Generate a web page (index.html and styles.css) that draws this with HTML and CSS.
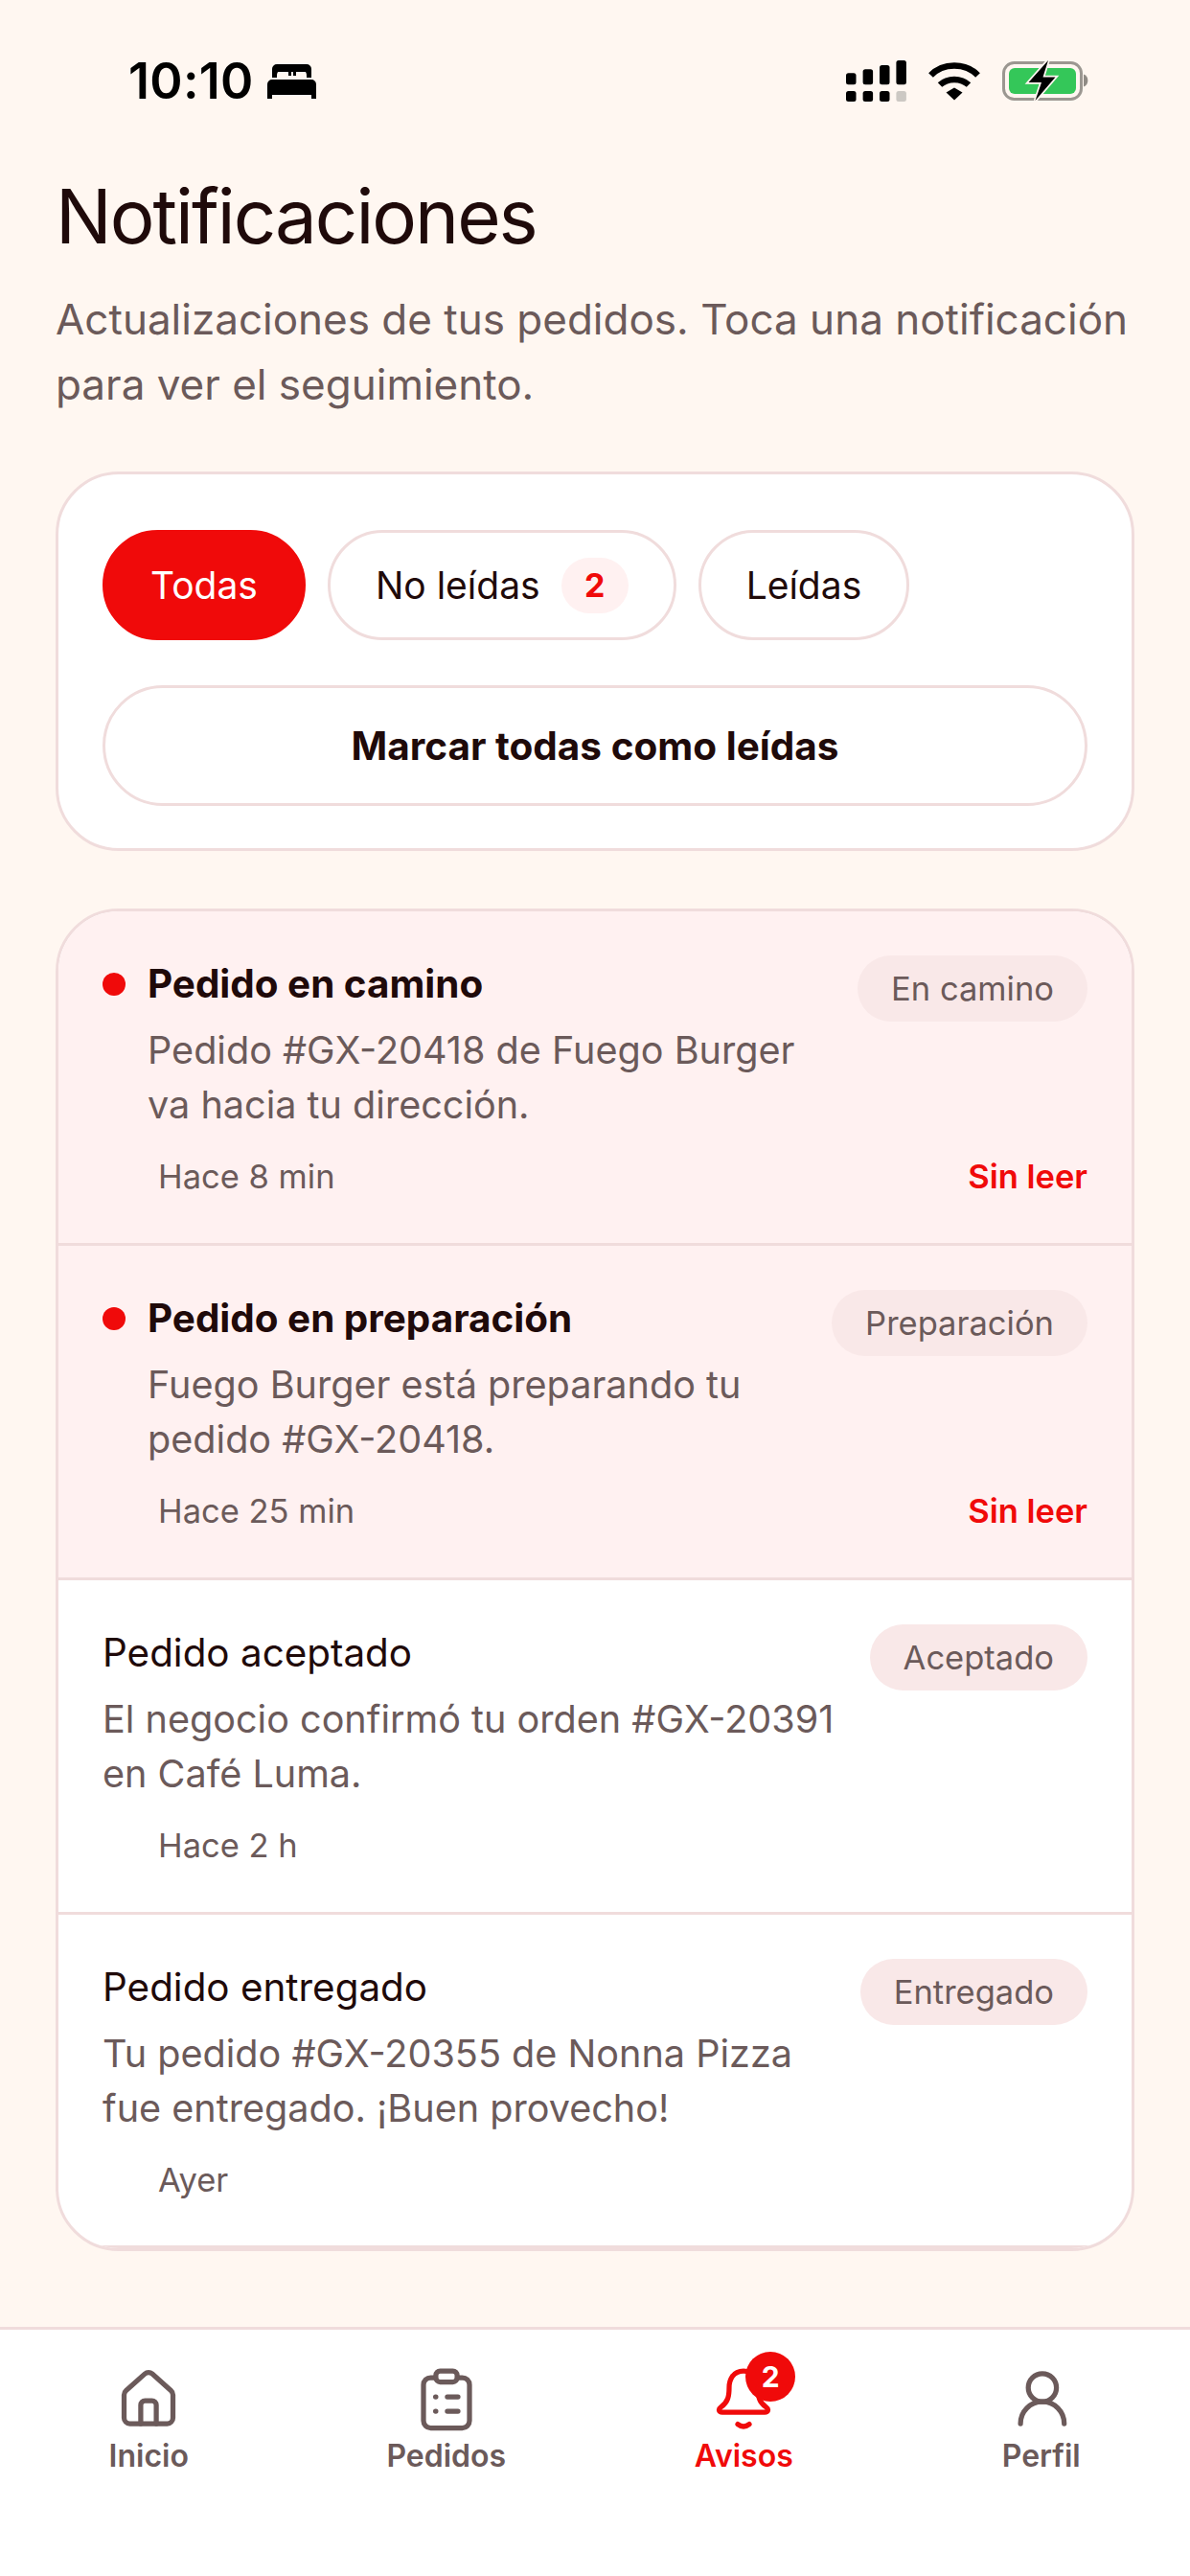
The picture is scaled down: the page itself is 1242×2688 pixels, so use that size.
FILE: index.html
```html
<!DOCTYPE html>
<html lang="es">
<head>
    <meta charset="UTF-8">
    <meta name="viewport" content="width=device-width, initial-scale=1.0">
    <title>Notificaciones</title>
    <link rel="stylesheet" href="styles.css">
</head>
<body>

<div class="page">
    <!-- Status bar -->
    <div class="status-bar">
        <div class="status-left">
            <span class="clock">10:10</span>
            <svg class="bed" width="52" height="36" viewBox="0 0 52 36">
                <path d="M5 14V5a5 5 0 0 1 5-5h31a5 5 0 0 1 5 5v9h-5v-2a6 6 0 0 0-1-4H30v4h-3V8h-2v4h-3V8H11a6 6 0 0 0-1 4v2z"/>
                <path d="M0 21a5 5 0 0 1 5-5h41a5 5 0 0 1 5 5v15h-5v-4H5v4H0z"/>
            </svg>
        </div>
        <div class="status-right">
            <svg width="63" height="43" viewBox="0 0 63 43">
                <rect x="0" y="13.3" width="10.5" height="12" rx="2.5"/>
                <rect x="17.6" y="9.3" width="10.5" height="16" rx="2.5"/>
                <rect x="35" y="5" width="10.5" height="20.300" rx="2.5"/>
                <rect x="52.400" y="0" width="10.5" height="25.300" rx="2.5"/>
                <rect x="0" y="32" width="10.5" height="11" rx="2.5"/>
                <rect x="17.6" y="32" width="10.5" height="11" rx="2.5"/>
                <rect x="35" y="32" width="10.5" height="11" rx="2.5"/>
                <rect x="52.400" y="32" width="10.5" height="11" rx="2.5" fill="#ccc8c3"/>
            </svg>
            <svg width="56" height="41" viewBox="0 0 56 41">
                <path d="M3.500 14.500C16 1 40 1 52.500 14.500" fill="none" stroke="#000" stroke-width="6.500"/>
                <path d="M13 24.500C21 17 35 17 43 24.500" fill="none" stroke="#000" stroke-width="6.500"/>
                <path d="M19.500 32.500L28 27.500L36.500 32.500L28 40.500Z"/>
            </svg>
            <svg width="90" height="44" viewBox="0 0 90 44">
                <rect x="1.500" y="3.500" width="81" height="38" rx="11" fill="none" stroke="#9b9791" stroke-width="3"/>
                <rect x="7" y="9" width="70" height="27" rx="6" fill="#34c759"/>
                <path d="M85 15.500a7 7 0 0 1 0 13z" fill="#8f8b85"/>
                <path d="M48 1L27.500 24H41L34.500 43L55.500 18.500H42.500Z" stroke="#fff7f1" stroke-width="3.500" paint-order="stroke"/>
            </svg>
        </div>
    </div>

    <main class="content">
        <h1 class="title">Notificaciones</h1>
        <p class="subtitle">Actualizaciones de tus pedidos. Toca una notificación para ver el seguimiento.</p>

        <!-- Filters -->
        <section class="card filters">
            <div class="chips">
                <span class="chip active">Todas</span>
                <span class="chip">No leídas <span class="chip-count">2</span></span>
                <span class="chip">Leídas</span>
            </div>
            <div class="mark-all">Marcar todas como leídas</div>
        </section>

        <!-- Notification list -->
        <section class="card list">
            <article class="item unread">
                <div class="item-top">
                    <div class="item-text">
                        <h2 class="item-title"><span class="dot"></span>Pedido en camino</h2>
                        <p class="item-desc">Pedido #GX-20418 de Fuego Burger va hacia tu dirección.</p>
                    </div>
                    <span class="tag">En camino</span>
                </div>
                <div class="item-meta">
                    <span class="time">Hace 8 min</span>
                    <span class="unread-label">Sin leer</span>
                </div>
            </article>
            <article class="item unread">
                <div class="item-top">
                    <div class="item-text">
                        <h2 class="item-title"><span class="dot"></span>Pedido en preparación</h2>
                        <p class="item-desc">Fuego Burger está preparando tu pedido #GX-20418.</p>
                    </div>
                    <span class="tag">Preparación</span>
                </div>
                <div class="item-meta">
                    <span class="time">Hace 25 min</span>
                    <span class="unread-label">Sin leer</span>
                </div>
            </article>
            <article class="item">
                <div class="item-top">
                    <div class="item-text">
                        <h2 class="item-title">Pedido aceptado</h2>
                        <p class="item-desc">El negocio confirmó tu orden #GX-20391 en Café Luma.</p>
                    </div>
                    <span class="tag">Aceptado</span>
                </div>
                <div class="item-meta">
                    <span class="time">Hace 2 h</span>
                </div>
            </article>
            <article class="item">
                <div class="item-top">
                    <div class="item-text">
                        <h2 class="item-title">Pedido entregado</h2>
                        <p class="item-desc">Tu pedido #GX-20355 de Nonna Pizza fue entregado. ¡Buen provecho!</p>
                    </div>
                    <span class="tag">Entregado</span>
                </div>
                <div class="item-meta">
                    <span class="time">Ayer</span>
                </div>
            </article>
        </section>
    </main>

    <!-- Bottom tabs -->
    <nav class="tabs">
        <div class="tab">
            <svg class="tab-icon" viewBox="0 0 24 24">
                <path d="M3.500 11a2 2 0 0 1 .7-1.500L10.700 3.700a2 2 0 0 1 2.600 0L19.800 9.500a2 2 0 0 1 .7 1.500V19a2 2 0 0 1-2 2H5.500a2 2 0 0 1-2-2z"/>
                <path d="M9.300 21V14.500a1.500 1.500 0 0 1 1.500-1.500h2.400a1.500 1.500 0 0 1 1.500 1.500V21"/>
            </svg>
            <span>Inicio</span>
        </div>
        <div class="tab">
            <svg class="tab-icon" viewBox="0 0 24 24">
                <path d="M8 5H6.500a2.500 2.500 0 0 0-2.500 2.500V20a2.500 2.500 0 0 0 2.500 2.500h11A2.500 2.500 0 0 0 20 20V7.500A2.500 2.500 0 0 0 17.500 5H16"/>
                <rect x="8.300" y="2.700" width="7.400" height="3.800" rx="1.500"/>
                <path d="M8.200 11.700h.1M8.200 16.700h.1M12.300 11.700h3.700M12.300 16.700h3.700"/>
            </svg>
            <span>Pedidos</span>
        </div>
        <div class="tab active">
            <div class="tab-icon-wrap">
                <svg class="tab-icon" viewBox="0 0 24 24">
                    <path d="M12 2.700C8.300 2.700 7 5.800 7 8.500C7 11.500 6.600 13.500 4.200 15.200C3 16.100 3.500 17 4.600 17H19.400C20.500 17 21 16.100 19.800 15.200C17.400 13.500 17 11.500 17 8.500C17 5.800 15.700 2.700 12 2.700Z"/>
                    <path d="M10 21.200Q12 22.800 14 21.200"/>
                </svg>
                <span class="tab-badge">2</span>
            </div>
            <span>Avisos</span>
        </div>
        <div class="tab">
            <svg class="tab-icon" viewBox="0 0 24 24">
                <circle cx="12.300" cy="8.500" r="4.900"/>
                <path d="M4.700 21c0-4.200 3.300-7.600 7.600-7.600s7.600 3.400 7.600 7.600"/>
            </svg>
            <span>Perfil</span>
        </div>
    </nav>
</div>

</body>
</html>
```

FILE: styles.css
```css
* {
    box-sizing: border-box;
}
body {
    margin: 0;
    background-color: #fff7f1;
    font-family: Inter, "Noto Sans", sans-serif;
    color: #1f0a0a;
}
.page {
    width: 1242px;
    height: 2688px;
    display: flex;
    flex-direction: column;
    overflow: hidden;
}

/* status bar */
.status-bar {
    height: 150px;
    padding: 62px 106px 0 134px;
    display: flex;
    justify-content: space-between;
    align-items: flex-start;
    flex-shrink: 0;
}
.status-left {
    display: flex;
    align-items: center;
    gap: 14px;
    color: #000;
}
.clock {
    font-size: 52px;
    line-height: 46px;
    font-weight: 600;
    letter-spacing: 0.3px;
}
.status-right {
    display: flex;
    align-items: center;
    gap: 22px;
}

/* header */
.content {
    flex: 1;
    padding: 0 58px;
}
.title {
    margin: 26px 0 0;
    font-size: 78px;
    line-height: 100px;
    font-weight: 400;
    letter-spacing: -2px;
}
.subtitle {
    margin: 23px 0 0;
    font-size: 44px;
    line-height: 68px;
    color: #6b5a5a;
}

/* cards */
.card {
    background-color: #fff;
    border: 3px solid #f0dcdc;
    border-radius: 66px;
}
.filters {
    margin-top: 57px;
    height: 396px;
    padding: 58px 46px 0;
}
.chips {
    display: flex;
    gap: 23px;
}
.chip {
    height: 115px;
    padding: 0 47px;
    display: flex;
    align-items: center;
    gap: 22px;
    border: 3px solid #f0dcdc;
    border-radius: 58px;
    font-size: 39px;
    background-color: #fff;
}
.chip.active {
    background-color: #f00a0a;
    border-color: #f00a0a;
    color: #fff;
}
.chip-count {
    width: 70px;
    height: 58px;
    border-radius: 29px;
    background-color: #fff1f1;
    color: #f00a0a;
    font-size: 34px;
    font-weight: 700;
    display: flex;
    align-items: center;
    justify-content: center;
}
.mark-all {
    margin-top: 47px;
    height: 126px;
    border: 3px solid #f0dcdc;
    border-radius: 63px;
    display: flex;
    align-items: center;
    justify-content: center;
    font-size: 40.5px;
    font-weight: 700;
}

/* notification rows */
.list {
    margin-top: 60px;
    overflow: hidden;
}
.item {
    height: 349px;
    padding: 48px 46px 0;
    border-bottom: 3px solid #f0dcdc;
}
.item:last-child {
    height: 348px;
}
.item.unread {
    background-color: #fff1f1;
}
.item-top {
    display: flex;
    justify-content: space-between;
    align-items: flex-start;
}
.item-text {
    flex: 1;
    min-width: 0;
}
.item-title {
    margin: 0;
    font-size: 40.4px;
    line-height: 56px;
    font-weight: 400;
    display: flex;
    align-items: center;
}
.unread .item-title {
    font-weight: 700;
}
.dot {
    width: 24px;
    height: 24px;
    border-radius: 50%;
    background-color: #f00a0a;
    margin-right: 23px;
}
.item-desc {
    margin: 13px 0 0;
    width: 780px;
    font-size: 39.6px;
    line-height: 57px;
    color: #6b5a5a;
}
.unread .item-desc {
    margin-left: 47px;
    width: 700px;
}
.tag {
    height: 69px;
    margin-top: -2px;
    padding: 0 35px;
    border-radius: 35px;
    background-color: #f9e8e8;
    color: #6b5a5a;
    font-size: 34.5px;
    display: flex;
    align-items: center;
    flex-shrink: 0;
}
.item-meta {
    margin-top: 23px;
    padding-left: 58px;
    display: flex;
    justify-content: space-between;
    align-items: center;
    font-size: 34.5px;
    line-height: 46px;
}
.time {
    color: #6b5a5a;
}
.unread-label {
    color: #f00a0a;
    font-weight: 600;
}

/* bottom tabs */
.tabs {
    height: 260px;
    flex-shrink: 0;
    background-color: #fff;
    border-top: 3px solid #f0dcdc;
    display: grid;
    grid-template-columns: repeat(4, 1fr);
    padding-top: 35px;
}
.tab {
    display: flex;
    flex-direction: column;
    align-items: center;
    color: #6b5a5a;
    font-size: 32px;
    line-height: 40px;
    font-weight: 600;
}
.tab.active {
    color: #f00a0a;
}
.tab-icon-wrap {
    position: relative;
    height: 72px;
}
.tab-icon {
    width: 72px;
    height: 72px;
    fill: none;
    stroke: currentColor;
    stroke-width: 1.75;
    stroke-linecap: round;
    stroke-linejoin: round;
    display: block;
}
.tab > span {
    margin-top: 5px;
}
.tab-badge {
    position: absolute;
    left: 38px;
    top: -12px;
    width: 52px;
    height: 52px;
    border-radius: 50%;
    background-color: #f00a0a;
    color: #fff;
    font-size: 30px;
    font-weight: 700;
    display: flex;
    align-items: center;
    justify-content: center;
}
```
